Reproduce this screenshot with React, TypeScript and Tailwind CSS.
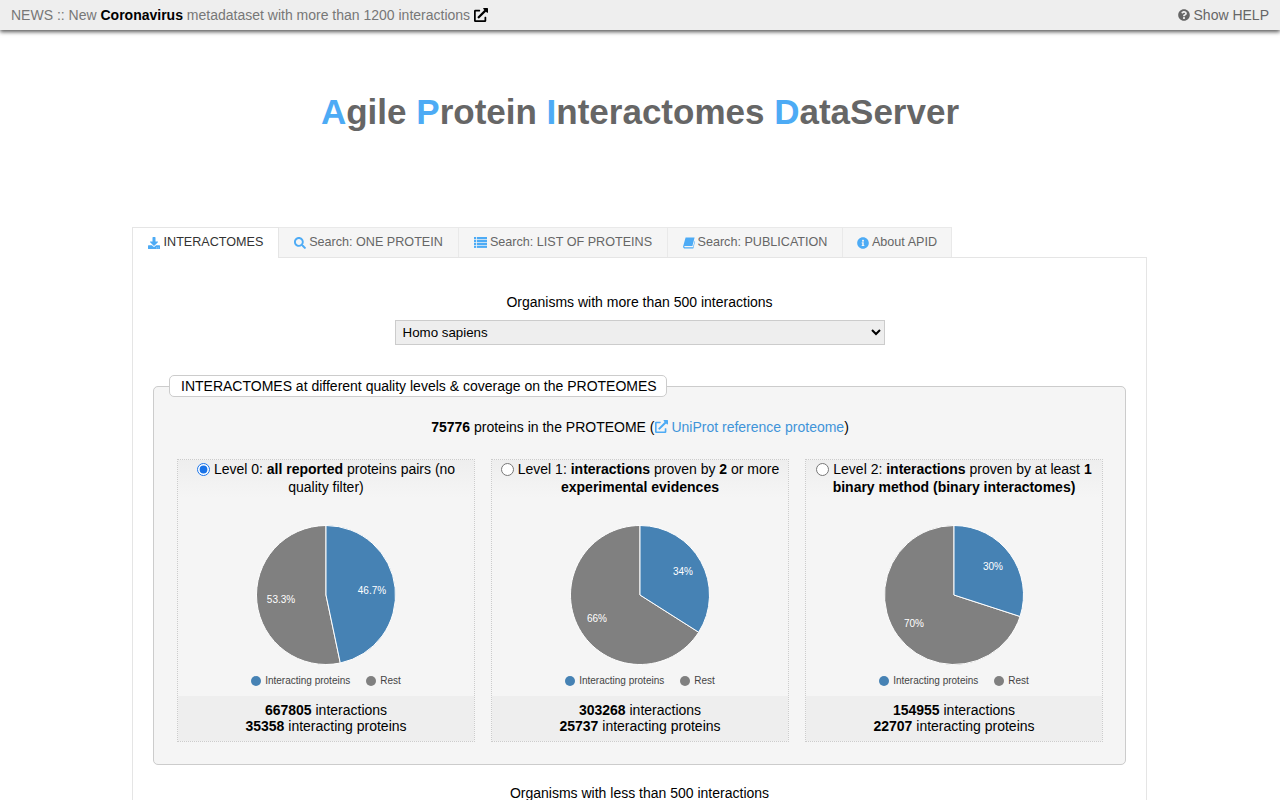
import { FaDownload, FaSearch, FaInfoCircle, FaQuestionCircle, FaExternalLinkAlt } from "react-icons/fa";
import type { ReactNode } from "react";

function ListIcon() {
  return (
    <svg width="13" height="11" viewBox="0 0 13 11" fill="currentColor" className="block">
      <rect x="0" y="0" width="2.2" height="2.2" />
      <rect x="0" y="2.9" width="2.2" height="2.2" />
      <rect x="0" y="5.8" width="2.2" height="2.2" />
      <rect x="0" y="8.7" width="2.2" height="2.2" />
      <rect x="3" y="0" width="10" height="2.2" />
      <rect x="3" y="2.9" width="10" height="2.2" />
      <rect x="3" y="5.8" width="10" height="2.2" />
      <rect x="3" y="8.7" width="10" height="2.2" />
    </svg>
  );
}

function BookIcon() {
  return (
    <svg width="12" height="12" viewBox="0 0 12 12" fill="currentColor" className="block">
      <path d="M2.6 0.5 H11.6 L9.4 9 H1.9 C1.3 9 1.1 9.6 1.5 10 C1.7 10.3 2 10.3 2.4 10.3 H10 L11.6 4 L12 4.6 L10.4 11.2 C10.3 11.5 10.1 11.6 9.8 11.6 H2 C0.9 11.6 0 10.6 0.1 9.4 Z" />
    </svg>
  );
}

const TABS = [
  { label: "Search: ONE PROTEIN", icon: <FaSearch size={12} className="block" />, width: "w-[180px]" },
  { label: "Search: LIST OF PROTEINS", icon: <ListIcon />, width: "w-[209px]" },
  { label: "Search: PUBLICATION", icon: <BookIcon />, width: "w-[175px]" },
  { label: "About APID", icon: <FaInfoCircle size={12} className="block" />, width: "w-[109px]" },
];

type Level = {
  head: ReactNode;
  pct: number;
  labelA: string;
  labelB: string;
  posA: [number, number];
  posB: [number, number];
  interactions: number;
  proteins: number;
};

const LEVELS: Level[] = [
  {
    head: (
      <>
        <input type="radio" name="level" defaultChecked className="m-0 mr-[4px] align-[-2px] w-[13px] h-[13px] accent-[#1a73e8]" />Level 0: <b>all reported</b> proteins pairs (no quality filter)
      </>
    ),
    pct: 46.7,
    labelA: "46.7%",
    labelB: "53.3%",
    posA: [46, -5],
    posB: [-45, 4],
    interactions: 667805,
    proteins: 35358,
  },
  {
    head: (
      <>
        <input type="radio" name="level" className="m-0 mr-[4px] align-[-2px] w-[13px] h-[13px]" />Level 1: <b>interactions</b> proven by <b>2</b> or more <b>experimental evidences</b>
      </>
    ),
    pct: 34,
    labelA: "34%",
    labelB: "66%",
    posA: [43, -24],
    posB: [-43, 23],
    interactions: 303268,
    proteins: 25737,
  },
  {
    head: (
      <>
        <input type="radio" name="level" className="m-0 mr-[4px] align-[-2px] w-[13px] h-[13px]" />Level 2: <b>interactions</b> proven by at least <b>1 binary method (binary interactomes)</b>
      </>
    ),
    pct: 30,
    labelA: "30%",
    labelB: "70%",
    posA: [39, -29],
    posB: [-40, 28],
    interactions: 154955,
    proteins: 22707,
  },
];

function Pie({ level }: { level: Level }) {
  const r = 69.5;
  const angle = (level.pct / 100) * 2 * Math.PI;
  const x = r * Math.sin(angle);
  const y = -r * Math.cos(angle);
  const big = level.pct > 50 ? 1 : 0;
  const slice = `M0 0 L0 ${-r} A${r} ${r} 0 ${big} 1 ${x} ${y} Z`;
  const rest = `M0 0 L${x} ${y} A${r} ${r} 0 ${1 - big} 1 0 ${-r} Z`;
  return (
    <svg width="150" height="150" viewBox="-75 -75 150 150">
      <path d={rest} fill="#808080" stroke="#fff" strokeWidth="1" />
      <path d={slice} fill="#4682b4" stroke="#fff" strokeWidth="1" />
      <text x={level.posA[0]} y={level.posA[1] + 3.5} fill="#fff" fontSize="10" textAnchor="middle">{level.labelA}</text>
      <text x={level.posB[0]} y={level.posB[1] + 3.5} fill="#fff" fontSize="10" textAnchor="middle">{level.labelB}</text>
    </svg>
  );
}

function LevelCard({ level }: { level: Level }) {
  return (
    <div className="w-[298px] h-[283px] border border-dotted border-[#ccc] flex flex-col">
      <div className="h-[38px] px-2 text-center leading-[18px] bg-gradient-to-b from-[#eeeeee] to-[#f5f5f5]">
        {level.head}
      </div>
      <div className="flex justify-center mt-[22px]">
        <Pie level={level} />
      </div>
      <div className="flex justify-center items-center gap-[16px] mt-[3px] text-[10px] text-[#444]">
        <span className="flex items-center gap-[4px]">
          <span className="w-[10px] h-[10px] rounded-full bg-[#4682b4]" />
          Interacting proteins
        </span>
        <span className="flex items-center gap-[4px]">
          <span className="w-[10px] h-[10px] rounded-full bg-[#808080]" />
          Rest
        </span>
      </div>
      <div className="mt-auto h-[45px] pt-[6px] text-center leading-[16px] bg-[#eeeeee]">
        <div><b>{level.interactions}</b> interactions</div>
        <div><b>{level.proteins}</b> interacting proteins</div>
      </div>
    </div>
  );
}

export default function App() {
  return (
    <div className="h-[800px] overflow-hidden bg-white text-[14px] text-black font-['Liberation_Sans',Arial,sans-serif]">
      {/* News bar */}
      <div className="h-[30px] bg-[#eeeeee] shadow-[0_2px_4px_rgba(0,0,0,0.65)] flex items-center justify-between pl-[11px] pr-[11px] text-[#777]">
        <div className="flex items-center gap-[4px]">
          <span>NEWS :: New <b className="text-black">Coronavirus</b> metadataset with more than 1200 interactions</span>
          <FaExternalLinkAlt size={14} className="text-black" />
        </div>
        <div className="flex items-center gap-[4px] text-[#666]">
          <FaQuestionCircle size={12} />
          <span>Show HELP</span>
        </div>
      </div>

      {/* Title */}
      <h1 className="mt-[60px] h-[137px] text-center text-[35px] leading-[44px] font-bold text-[#666]">
        <span className="text-[#4dabf5]">A</span>gile <span className="text-[#4dabf5]">P</span>rotein <span className="text-[#4dabf5]">I</span>nteractomes <span className="text-[#4dabf5]">D</span>ataServer
      </h1>

      {/* Tabs */}
      <div className="ml-[132px] w-[1015px]">
        <div className="flex h-[31px] text-[12.6px]">
          <div className="w-[147px] h-[31px] pb-px bg-white border border-b-0 border-[#e5e5e5] flex items-center justify-center gap-[4px] text-[#333] relative z-10">
            <FaDownload size={12} className="text-[#4dabf5]" />
            INTERACTOMES
          </div>
          {TABS.map((t) => (
            <div key={t.label} className={`${t.width} h-[30px] bg-[#f5f5f5] border border-l-0 border-b-0 border-[#e9e9e9] flex items-center justify-center gap-[3px] text-[#666]`}>
              <span className="text-[#4dabf5]">{t.icon}</span>
              {t.label}
            </div>
          ))}
        </div>

        {/* Panel */}
        <div className="-mt-px border border-[#e5e5e5] h-[600px] px-[20px] pt-[35px]">
          <div className="text-center leading-[18px]">Organisms with more than 500 interactions</div>
          <div className="flex justify-center mt-[9px]">
            <select className="w-[490px] h-[25px] bg-[#eeeeee] border border-[#ccc] text-[13.33px] pl-[3px]">
              <option>Homo sapiens</option>
            </select>
          </div>

          <fieldset className="mt-[30px] h-[390px] border border-[#ccc] rounded-[5px] bg-[#f5f5f5] pl-[23px] pr-[22px]">
            <legend className="ml-[-8px] h-[22px] pl-[11px] pr-[9px] leading-[20px] bg-white border border-[#ccc] rounded-[5px]">
              INTERACTOMES at different quality levels &amp; coverage on the PROTEOMES
            </legend>
            <div className="mt-[21px] text-center leading-[18px]">
              <b>75776</b> proteins in the PROTEOME (
              <span className="text-[#3f94d9]">
                <FaExternalLinkAlt size={13} className="inline align-[-1px] text-[#4dabf5]" /> UniProt reference proteome
              </span>
              )
            </div>
            <div className="flex justify-between mt-[23px]">
              {LEVELS.map((l) => (
                <LevelCard key={l.pct} level={l} />
              ))}
            </div>
          </fieldset>

          <div className="mt-[19px] text-center leading-[18px]">Organisms with less than 500 interactions</div>
        </div>
      </div>
    </div>
  );
}
